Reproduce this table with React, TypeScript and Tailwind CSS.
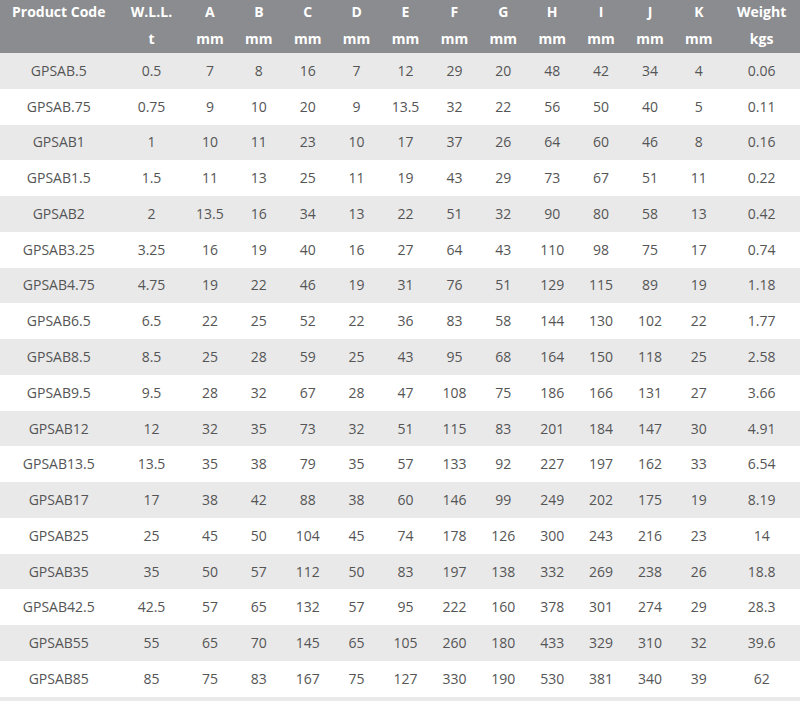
import React from "react";

const rows: string[][] = [
  ["GPSAB.5", "0.5", "7", "8", "16", "7", "12", "29", "20", "48", "42", "34", "4", "0.06"],
  ["GPSAB.75", "0.75", "9", "10", "20", "9", "13.5", "32", "22", "56", "50", "40", "5", "0.11"],
  ["GPSAB1", "1", "10", "11", "23", "10", "17", "37", "26", "64", "60", "46", "8", "0.16"],
  ["GPSAB1.5", "1.5", "11", "13", "25", "11", "19", "43", "29", "73", "67", "51", "11", "0.22"],
  ["GPSAB2", "2", "13.5", "16", "34", "13", "22", "51", "32", "90", "80", "58", "13", "0.42"],
  ["GPSAB3.25", "3.25", "16", "19", "40", "16", "27", "64", "43", "110", "98", "75", "17", "0.74"],
  ["GPSAB4.75", "4.75", "19", "22", "46", "19", "31", "76", "51", "129", "115", "89", "19", "1.18"],
  ["GPSAB6.5", "6.5", "22", "25", "52", "22", "36", "83", "58", "144", "130", "102", "22", "1.77"],
  ["GPSAB8.5", "8.5", "25", "28", "59", "25", "43", "95", "68", "164", "150", "118", "25", "2.58"],
  ["GPSAB9.5", "9.5", "28", "32", "67", "28", "47", "108", "75", "186", "166", "131", "27", "3.66"],
  ["GPSAB12", "12", "32", "35", "73", "32", "51", "115", "83", "201", "184", "147", "30", "4.91"],
  ["GPSAB13.5", "13.5", "35", "38", "79", "35", "57", "133", "92", "227", "197", "162", "33", "6.54"],
  ["GPSAB17", "17", "38", "42", "88", "38", "60", "146", "99", "249", "202", "175", "19", "8.19"],
  ["GPSAB25", "25", "45", "50", "104", "45", "74", "178", "126", "300", "243", "216", "23", "14"],
  ["GPSAB35", "35", "50", "57", "112", "50", "83", "197", "138", "332", "269", "238", "26", "18.8"],
  ["GPSAB42.5", "42.5", "57", "65", "132", "57", "95", "222", "160", "378", "301", "274", "29", "28.3"],
  ["GPSAB55", "55", "65", "70", "145", "65", "105", "260", "180", "433", "329", "310", "32", "39.6"],
  ["GPSAB85", "85", "75", "83", "167", "75", "127", "330", "190", "530", "381", "340", "39", "62"],
];

const head1 = ["Product Code", "W.L.L.", "A", "B", "C", "D", "E", "F", "G", "H", "I", "J", "K", "Weight"];
const head2 = ["", "t", "mm", "mm", "mm", "mm", "mm", "mm", "mm", "mm", "mm", "mm", "mm", "kgs"];

const grid = "grid grid-cols-[117.5px_68px_repeat(11,48.9px)_1fr]";

export default function App() {
  return (
    <div
      className="w-[800px] h-[701px] overflow-hidden bg-[#e9e9ea]"
      style={{ fontFamily: '"Open Sans", "Noto Sans", sans-serif' }}
    >
      <div className="bg-[#8b8c8f] text-white font-bold text-[14px]">
        <div className={`${grid} h-[24px] items-center`}>
          {head1.map((h, i) => (
            <div key={i} className="text-center leading-none">{h}</div>
          ))}
        </div>
        <div className={`${grid} h-[29px] items-center`}>
          {head2.map((h, i) => (
            <div key={i} className="text-center leading-none">{h}</div>
          ))}
        </div>
      </div>
      {rows.map((r, ri) => (
        <div
          key={ri}
          className={`${grid} h-[35.78px] items-center text-[14px] text-[#555555] ${ri % 2 === 0 ? "bg-[#e9e9ea]" : "bg-white"}`}
        >
          {r.map((c, ci) => (
            <div key={ci} className="text-center leading-none">{c}</div>
          ))}
        </div>
      ))}
    </div>
  );
}
